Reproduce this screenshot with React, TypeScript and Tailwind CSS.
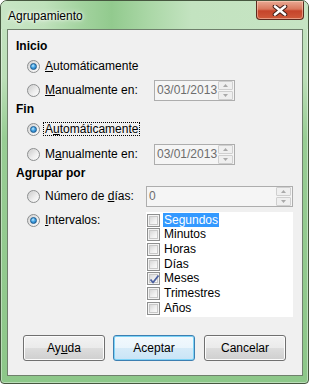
import React from 'react'

function Radio({ checked }: { checked?: boolean }) {
  return (
    <span className="flex h-[13px] w-[13px] shrink-0 items-center justify-center rounded-full border border-[#8c8e8f] bg-[linear-gradient(135deg,#d2d2d2_0%,#e9e9e9_50%,#fdfdfd_100%)]">
      {checked ? (
        <span className="h-[7px] w-[7px] rounded-full border border-[#1b5a8e] bg-[radial-gradient(circle_at_40%_35%,#c4ebff_0%,#4aa8e6_40%,#1367b0_100%)]" />
      ) : (
        <span className="h-[9px] w-[9px] rounded-full bg-[linear-gradient(135deg,#cfcfcf_0%,#eeeeee_60%,#fafafa_100%)]" />
      )}
    </span>
  )
}

function Check({ checked }: { checked?: boolean }) {
  return (
    <span className="relative flex h-[13px] w-[13px] shrink-0 items-center justify-center border border-[#8e8f8f] bg-[#f4f4f4]">
      <span className="h-[9px] w-[9px] border border-[#c8c8c8] bg-[linear-gradient(135deg,#d8d8d8_0%,#f0f0f0_60%,#fafafa_100%)]" />
      {checked && (
        <svg className="absolute left-[1px] top-[1px]" width="11" height="11" viewBox="0 0 11 11">
          <path d="M1.5 5.5 L4 8.5 L9.5 1.5" fill="none" stroke="#4c61a0" strokeWidth="1.8" strokeLinejoin="round" />
        </svg>
      )}
    </span>
  )
}

function Spinner() {
  return (
    <span className="flex h-[19px] w-[15px] shrink-0 flex-col gap-[1px]">
      <span className="flex h-[9px] items-center justify-center rounded-[1px] border border-[#cfcfcf] bg-[#efefef]">
        <svg width="5" height="3" viewBox="0 0 5 3"><path d="M0 3 L2.5 0 L5 3 Z" fill="#a9a9a9" /></svg>
      </span>
      <span className="flex h-[9px] items-center justify-center rounded-[1px] border border-[#cfcfcf] bg-[#efefef]">
        <svg width="5" height="3" viewBox="0 0 5 3"><path d="M0 0 L2.5 3 L5 0 Z" fill="#a9a9a9" /></svg>
      </span>
    </span>
  )
}

function NumField({ value, width }: { value: string; width: string }) {
  return (
    <div className={`flex h-[21px] ${width} items-center justify-between border border-[#adadad] bg-[#f5f5f5] pl-[2px] pr-[1px] text-[#6d6d6d]`}>
      <span>{value}</span>
      <Spinner />
    </div>
  )
}

function Button({ children, primary }: { children: React.ReactNode; primary?: boolean }) {
  return (
    <div
      className={
        primary
          ? 'flex h-[26px] w-[82px] items-center justify-center rounded-[3px] border border-[#3c7fb1] bg-[linear-gradient(180deg,#f2f9fd_0%,#eaf5fc_48%,#d6ebf8_50%,#c9e4f6_100%)] shadow-[inset_0_0_0_1px_#7cd3f7]'
          : 'flex h-[26px] w-[82px] items-center justify-center rounded-[3px] border border-[#707070] bg-[linear-gradient(180deg,#f2f2f2_0%,#ebebeb_48%,#dddddd_50%,#cfcfcf_100%)] shadow-[inset_0_0_0_1px_#fcfcfc]'
      }
    >
      {children}
    </div>
  )
}

const intervals = ['Segundos', 'Minutos', 'Horas', 'Días', 'Meses', 'Trimestres', 'Años']

export default function App() {
  return (
    <div className="h-[384px] w-[309px] bg-white font-['Liberation_Sans',Arial,sans-serif] text-[12px] leading-[15px] text-black">
      <div className="flex h-full w-full flex-col overflow-hidden rounded-t-[7px] rounded-b-[4px] border border-[#46573f] bg-[linear-gradient(180deg,#c4e3c1_0%,#bcdfb8_20%,#98cd94_36%,#8dc789_100%)] shadow-[inset_0_0_0_1px_rgba(255,255,255,0.4)]">
        {/* title bar */}
        <div className="flex h-[28px] shrink-0 items-start justify-between bg-[linear-gradient(90deg,#c8e5c5_0%,#bfe1bb_14%,#a3d39f_26%,#92ca8e_36%,#aad7a6_48%,#c3e3c0_62%,#c6e4c3_100%)]">
          <span className="pl-[7px] pt-[8px] [text-shadow:0_0_6px_#ffffff,0_0_3px_#ffffff]">Agrupamiento</span>
          <div className="mr-[4px] flex h-[19px] w-[48px] items-center justify-center rounded-b-[4px] border border-t-0 border-[#5c2a1f] bg-[linear-gradient(180deg,#e9a994_0%,#d9785d_45%,#c5442b_55%,#cf5a3b_100%)] shadow-[inset_0_0_0_1px_rgba(255,220,200,0.5)]">
            <svg width="16" height="11" viewBox="0 0 16 11">
              <path d="M3 1.5 L13 9.5 M13 1.5 L3 9.5" stroke="#43201a" strokeWidth="4.6" strokeLinecap="round" />
              <path d="M3 1.5 L13 9.5 M13 1.5 L3 9.5" stroke="#ffffff" strokeWidth="2.6" strokeLinecap="round" />
            </svg>
          </div>
        </div>

        {/* client */}
        <div className="flex flex-1 pb-[7px] pl-[6px] pr-[5px]">
          <div className="flex flex-1 flex-col border border-[#6f806c] bg-[#f0f0f0] pt-[8px]">
            <div className="flex h-[16px] items-center pl-[8px] font-bold">Inicio</div>
            <div className="flex h-[24px] items-center gap-[5px] pl-[19px]">
              <Radio checked />
              <span><u>A</u>utomáticamente</span>
            </div>
            <div className="flex h-[25px] items-center pl-[19px]">
              <div className="flex w-[127px] items-center gap-[5px]">
                <Radio />
                <span><u>M</u>anualmente en:</span>
              </div>
              <NumField value="03/01/2013" width="w-[81px]" />
            </div>

            <div className="flex h-[12px] items-center pl-[8px] font-bold">Fin</div>
            <div className="flex h-[28px] items-center gap-[4px] pl-[19px]">
              <Radio checked />
              <span className="px-[1px] leading-[12px] outline-1 outline-dotted outline-black">A<u>u</u>tomáticamente</span>
            </div>
            <div className="flex h-[22px] items-center pl-[19px]">
              <div className="flex w-[127px] items-center gap-[5px]">
                <Radio />
                <span>M<u>a</u>nualmente en:</span>
              </div>
              <NumField value="03/01/2013" width="w-[81px]" />
            </div>

            <div className="flex h-[16px] items-center pl-[8px] font-bold">Agrupar por</div>
            <div className="flex h-[30px] items-center pl-[19px]">
              <div className="flex w-[119px] items-center gap-[5px]">
                <Radio />
                <span>Número de <u>d</u>ías:</span>
              </div>
              <NumField value="0" width="w-[147px]" />
            </div>
            <div className="flex pl-[19px]">
              <div className="flex h-[18px] w-[119px] items-center gap-[5px]">
                <Radio checked />
                <span><u>I</u>ntervalos:</span>
              </div>
              <div className="mt-[1px] flex h-[105px] w-[147px] flex-col bg-white pt-[1px]">
                {intervals.map((name) => (
                  <div key={name} className="flex h-[14.67px] items-center gap-[3px] pl-[1px]">
                    <Check checked={name === 'Meses'} />
                    <span className={name === 'Segundos' ? 'bg-[#3399ff] px-[1px] leading-[14px] text-white' : 'px-[1px]'}>{name}</span>
                  </div>
                ))}
              </div>
            </div>

            <div className="mt-[18px] flex gap-[8px] pl-[15px]">
              <Button>Ay<u>u</u>da</Button>
              <Button primary>Aceptar</Button>
              <div className="ml-[1px]">
                <Button>Cancelar</Button>
              </div>
            </div>
          </div>
        </div>
      </div>
    </div>
  )
}
